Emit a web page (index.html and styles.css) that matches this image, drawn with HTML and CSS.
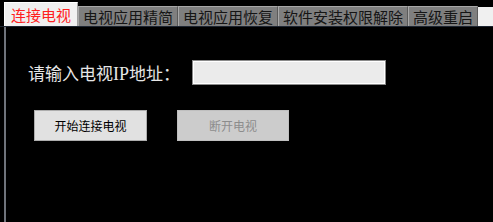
FILE: index.html
```html
<!DOCTYPE html>
<html>
<head>
<meta charset="utf-8">
<link rel="stylesheet" href="styles.css">
</head>
<body>
<div class="tabs">
  <div class="tab active">连接电视</div>
  <div class="tab">电视应用精简</div>
  <div class="tab">电视应用恢复</div>
  <div class="tab">软件安装权限解除</div>
  <div class="tab">高级重启</div>
  <div class="filler"></div>
</div>
<div class="panel">
  <div class="row">
    <span class="label">请输入电视<span class="latin">IP</span>地址：</span>
    <input class="ip" type="text">
  </div>
  <div class="buttons">
    <button class="btn">开始连接电视</button>
    <button class="btn disabled">断开电视</button>
  </div>
</div>
</body>
</html>
```
FILE: styles.css
```css
html, body {
  margin: 0;
  padding: 0;
  background: #000;
  width: 493px;
  height: 222px;
  overflow: hidden;
  font-family: "Noto Sans CJK SC", "Noto Sans", sans-serif;
}
.tabs {
  display: flex;
  align-items: flex-end;
  height: 27px;
  padding-left: 4px;
  box-sizing: border-box;
  border-bottom: 1px solid #1c2430;
}
.tab {
  height: 20px;
  line-height: 20px;
  font-size: 15px;
  padding: 0 4px;
  background: #7f7f7f;
  color: #151515;
  border-top: 1px solid #a8a8a8;
  border-left: 1px solid #a8a8a8;
  border-right: 1px solid #5a5a5a;
  box-sizing: border-box;
  white-space: nowrap;
}
.tab.active {
  height: 24px;
  line-height: 23px;
  background: #f0f0f0;
  color: #ff2020;
  border-top: 1px solid #ffffff;
  border-left: 1px solid #ffffff;
  border-right: 1px solid #a0a0a0;
  padding: 0 6px;
  width: 74px;
}
.filler {
  flex: 1;
  height: 19px;
  background: #f0f0f0;
}
.panel {
  margin-left: 4px;
  border-left: 2px solid #6f737b;
  height: 195px;
  box-sizing: border-box;
}
.row {
  display: flex;
  align-items: center;
  padding-top: 30px;
  padding-left: 22px;
}
.label {
  width: 164px;
  color: #e6e6e6;
  font-size: 17px;
  line-height: 25px;
  padding-top: 3px;
  white-space: nowrap;
}
.latin {
  font-family: "Liberation Serif", serif;
  font-size: 18px;
}
.ip {
  margin: 0;
  width: 194px;
  height: 25px;
  box-sizing: border-box;
  background: #ebebeb;
  border: 1px solid #8a8a8a;
  box-shadow: inset 0 0 0 1px #ffffff;
  padding: 0;
  outline: none;
}
.buttons {
  display: flex;
  gap: 30px;
  padding-left: 28px;
  padding-top: 23px;
}
.btn {
  width: 113px;
  height: 31px;
  margin: 0;
  padding: 0;
  background: #e1e1e1;
  border: 1px solid #adadad;
  color: #000;
  font-family: "Noto Sans CJK SC", "Noto Sans", sans-serif;
  font-size: 12px;
}
.btn.disabled {
  width: 112px;
  background: #cccccc;
  border-color: #bfbfbf;
  color: #8c8c8c;
}
```
